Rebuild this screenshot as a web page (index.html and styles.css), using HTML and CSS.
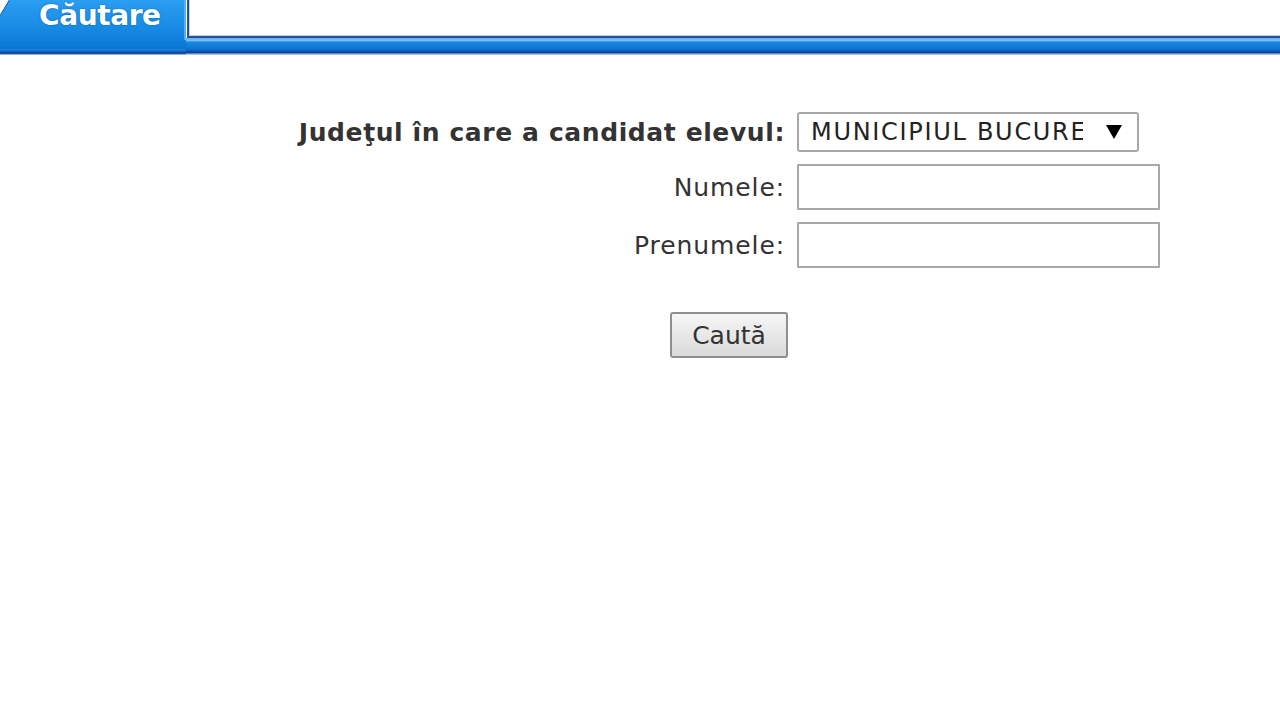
FILE: index.html
```html
<!DOCTYPE html>
<html lang="ro">
<head>
<meta charset="utf-8">
<title>Căutare</title>
<link rel="stylesheet" href="styles.css">
</head>
<body>
<header class="header">
  <div class="tab">
    <svg class="tab-corner" width="12" height="18" viewBox="0 0 12 18"><path d="M9 0 L0 15" stroke="#2b4f8f" stroke-width="1.5" fill="none"/></svg>
    <span class="tab-label">Căutare</span>
  </div>
  <div class="tab-rest">
    <div class="blank"></div>
    <div class="bar"></div>
  </div>
</header>
<main>
  <form class="search-form">
    <label class="lbl lbl-bold" for="judet">Judeţul în care a candidat elevul:</label>
    <div class="field">
      <select id="judet" class="select">
        <option>MUNICIPIUL BUCUREŞTI</option>
      </select>
    </div>
    <label class="lbl" for="nume">Numele:</label>
    <div class="field"><input id="nume" class="text-input" type="text"></div>
    <label class="lbl" for="prenume">Prenumele:</label>
    <div class="field"><input id="prenume" class="text-input" type="text"></div>
    <div class="actions"><button type="button" class="btn">Caută</button></div>
  </form>
</main>
</body>
</html>
```

FILE: styles.css
```css
* { box-sizing: border-box; }
html, body { margin: 0; padding: 0; background: #fff; }
body { font-family: "DejaVu Sans", Verdana, sans-serif; color: #333; }

.header { display: flex; height: 55px; }
.tab {
  position: relative;
  width: 186px;
  flex: none;
  background: linear-gradient(to bottom, #2a9ef0 0%, #1a8de6 45%, #0b79d6 85%, #0a70cc 88%, #1b84dc 90%, #0a6cc8 93%, #0b3f8f 97%, #d8e6f5 100%);
  clip-path: polygon(9px 0, 100% 0, 100% 100%, 0 100%, 0 15px);
  display: flex;
  align-items: flex-start;
  padding-left: 39px;
}
.tab-corner { position: absolute; left: 0; top: 0; }
.tab-label {
  color: #fff;
  font-weight: bold;
  font-size: 28px;
  line-height: 31px;
  letter-spacing: -0.4px;
  text-shadow: 0 0 2px rgba(0,40,110,0.5);
}
.tab::after {
  content: "";
  position: absolute;
  right: 0; top: 0;
  width: 2px; height: 40px;
  background: #4fb0f4;
}
.tab-rest { flex: 1; display: flex; flex-direction: column; }
.blank {
  height: 38px;
  border-left: 2px solid #2e4f96;
  border-bottom: 2px solid #2e4f96;
  box-shadow: inset 1px -1px 0 #b8d4f0;
  background: #fff;
  margin-left: 1px;
}
.bar {
  flex: 1;
  background: linear-gradient(to bottom, #5aa9ec 0%, #7cc2f6 14%, #1a86dc 25%, #0b78d6 60%, #0a6ccb 70%, #0b3f8f 85%, #d8e6f5 100%);
}

main { padding-top: 57px; }
.search-form {
  margin-left: 298px;
  display: grid;
  grid-template-columns: 487px 363px;
  column-gap: 12px;
  row-gap: 12px;
  align-items: center;
  width: 862px;
}
.lbl { text-align: right; font-size: 25px; letter-spacing: 0.9px; color: #333; white-space: nowrap; }
.lbl-bold { font-weight: bold; letter-spacing: 0.6px; }
.field { display: flex; }
.select {
  appearance: none;
  -webkit-appearance: none;
  width: 342px;
  height: 40px;
  border: 2px solid #a8a8a8;
  border-radius: 3px;
  background: #fff url("data:image/svg+xml;utf8,<svg xmlns='http://www.w3.org/2000/svg' width='18' height='16'><path d='M1 1 H17 L9 15 Z' fill='black'/></svg>") no-repeat right 14px center;
  font-family: "DejaVu Sans", Verdana, sans-serif;
  font-size: 24px;
  letter-spacing: 1.7px;
  color: #222;
  padding: 0 54px 0 12px;
}
.text-input {
  width: 363px;
  height: 46px;
  border: 2px solid #a8a8a8;
  border-radius: 1px;
  background: #fff;
  font-size: 25px;
}
.actions { grid-column: 1 / 3; justify-self: center; margin-top: 32px; }
.btn {
  width: 118px;
  height: 46px;
  border: 2px solid #8f8f8f;
  border-radius: 3px;
  background: linear-gradient(to bottom, #f6f6f6 0%, #e8e8e8 50%, #dadada 100%);
  font-family: "DejaVu Sans", Verdana, sans-serif;
  font-size: 25px;
  color: #333;
  padding: 0;
}
```
